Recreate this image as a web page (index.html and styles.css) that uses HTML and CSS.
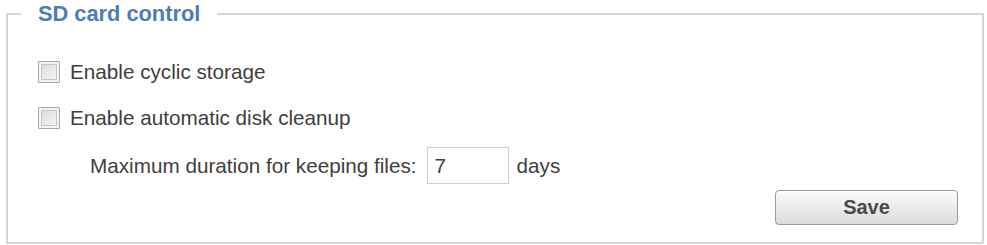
FILE: index.html
```html
<!DOCTYPE html>
<html>
<head>
<meta charset="utf-8">
<link rel="stylesheet" href="styles.css">
</head>
<body>
<fieldset class="panel">
  <legend class="panel-title">SD card control</legend>
  <div class="panel-body">
    <label class="check-row">
      <input type="checkbox" class="check">
      <span>Enable cyclic storage</span>
    </label>
    <label class="check-row second">
      <input type="checkbox" class="check">
      <span>Enable automatic disk cleanup</span>
    </label>
    <div class="duration-row">
      <span>Maximum duration for keeping files:</span>
      <input type="text" class="days-input" value="7">
      <span>days</span>
    </div>
    <div class="actions">
      <button class="save-btn">Save</button>
    </div>
  </div>
</fieldset>
</body>
</html>
```

FILE: styles.css
```css
html, body {
  margin: 0;
  padding: 0;
  background: #ffffff;
}

body {
  font-family: "Liberation Sans", Arial, sans-serif;
  font-size: 20.7px;
  color: #404040;
  padding: 2px 3px 0 6px;
}

.panel {
  margin: 0;
  padding: 0;
  border: 2px solid #d6d6d6;
  min-width: 0;
}

.panel-title {
  margin-left: 13px;
  padding: 0 17px;
  font-size: 21.8px;
  font-weight: bold;
  line-height: 24px;
  color: #4d7cb8;
}

.panel-body {
  padding: 35px 24px 17px 30px;
  display: flex;
  flex-direction: column;
}

.check-row {
  display: flex;
  align-items: center;
  height: 22px;
  gap: 10px;
}

.check-row.second {
  margin-top: 24px;
}

.check {
  appearance: none;
  -webkit-appearance: none;
  margin: 0;
  width: 22px;
  height: 22px;
  border: 1px solid #a8a8a8;
  border-radius: 1px;
  background: linear-gradient(135deg, #d2d2d2 0%, #e8e8e8 45%, #f6f6f6 100%);
  box-shadow: inset 0 0 0 2px #f4f4f4, inset 0 0 0 3px #c8c8c8;
}

.duration-row {
  display: flex;
  align-items: center;
  margin-top: 18px;
  margin-left: 52px;
  height: 37px;
}

.days-input {
  width: 82px;
  height: 37px;
  box-sizing: border-box;
  margin: 0 8px 0 10px;
  padding: 0 0 0 7px;
  border: 1px solid #cfcfcf;
  font-family: "Liberation Sans", Arial, sans-serif;
  font-size: 20.7px;
  color: #404040;
  background: #fff;
}

.actions {
  display: flex;
  justify-content: flex-end;
  margin-top: 6px;
}

.save-btn {
  width: 183px;
  height: 35px;
  border: 1px solid #9a9a9a;
  border-radius: 4px;
  background: linear-gradient(#fbfbfb, #e9e9e9 55%, #dcdcdc);
  box-shadow: inset 0 1px 0 #ffffff;
  font-family: "Liberation Sans", Arial, sans-serif;
  font-size: 20px;
  font-weight: bold;
  color: #4a4a4a;
  padding: 0;
}
```
